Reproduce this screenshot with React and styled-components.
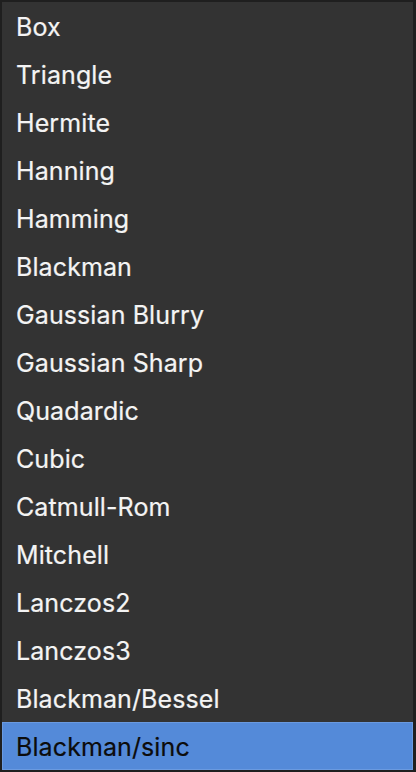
import React from "react";
import styled, { createGlobalStyle } from "styled-components";

const GlobalStyle = createGlobalStyle`
  html, body {
    margin: 0;
    padding: 0;
    background: #1e1e1e;
  }
`;

const filters = [
  "Box",
  "Triangle",
  "Hermite",
  "Hanning",
  "Hamming",
  "Blackman",
  "Gaussian Blurry",
  "Gaussian Sharp",
  "Quadardic",
  "Cubic",
  "Catmull-Rom",
  "Mitchell",
  "Lanczos2",
  "Lanczos3",
  "Blackman/Bessel",
  "Blackman/sinc",
];

const Menu = styled.ul`
  list-style: none;
  margin: 0;
  padding: 0;
  width: 416px;
  height: 772px;
  box-sizing: border-box;
  border: 2px solid #1f1f1f;
  border-right-width: 3px;
  background: #333333;
  display: flex;
  flex-direction: column;
  font-family: Inter, "Liberation Sans", sans-serif;
`;

const Item = styled.li`
  height: 48px;
  box-sizing: border-box;
  display: flex;
  align-items: center;
  padding: 2px 0 0 14px;
  font-size: 25px;
  letter-spacing: 0.1px;
  -webkit-text-stroke: 0.2px currentColor;
  color: ${p => (p.selected ? "#0c0c0c" : "#f4f4f4")};
  background: ${p => (p.selected ? "#548ad9" : "transparent")};
  box-shadow: ${p => (p.selected ? "inset 0 0 0 1px #6a9ae0" : "none")};
`;

const App = () => {
  const selected = "Blackman/sinc";
  return (
    <>
      <GlobalStyle />
      <Menu>
        {filters.map(name => (
          <Item key={name} selected={name === selected}>
            {name}
          </Item>
        ))}
      </Menu>
    </>
  );
};

export default App;
